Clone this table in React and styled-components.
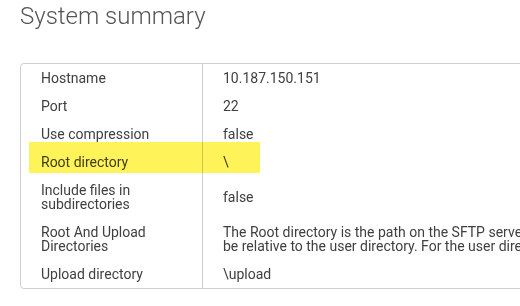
import React from 'react';
import styled, { createGlobalStyle } from 'styled-components';

const GlobalStyle = createGlobalStyle`
  html, body {
    margin: 0;
    padding: 0;
    background: #fff;
    overflow: hidden;
  }
  body {
    font-family: Roboto, "Liberation Sans", sans-serif;
    color: #404040;
  }
`;

const Page = styled.div`
  width: 520px;
  height: 306px;
  padding: 2px 0 0 20px;
  box-sizing: border-box;
  overflow: hidden;
`;

const Title = styled.h1`
  margin: 0 0 33px;
  font-size: 24px;
  line-height: 28px;
  font-weight: 300;
  color: #555;
  white-space: nowrap;
`;

const TableWrap = styled.div`
  position: relative;
  width: 640px;
`;

const Table = styled.div`
  display: grid;
  grid-template-columns: 182px 1fr;
  border: 1px solid #cfcfcf;
  border-radius: 4px;
  font-size: 14px;
  line-height: 14px;
`;

const Label = styled.div`
  padding: 7px 20px;
  border-right: 1px solid #cfcfcf;
  color: #404040;
`;

const Value = styled.div`
  padding: 7px 20px;
  display: flex;
  align-items: center;
  color: #404040;
  white-space: nowrap;
  overflow: hidden;
`;

const Highlight = styled.div`
  position: absolute;
  left: 9px;
  top: 79px;
  width: 231px;
  height: 31px;
  background: #fff35a;
  mix-blend-mode: multiply;
  pointer-events: none;
`;

const rows = [
  ['Hostname', '10.187.150.151'],
  ['Port', '22'],
  ['Use compression', 'false'],
  ['Root directory', '\\'],
  ['Include files in subdirectories', 'false'],
  [
    'Root And Upload Directories',
    <>
      The Root directory is the path on the SFTP server the user lands in. The upload directory must
      <br />
      be relative to the user directory. For the user directory the root is used.
    </>,
  ],
  ['Upload directory', '\\upload'],
];

const App = () => (
  <>
    <GlobalStyle />
    <Page>
      <Title>System summary</Title>
      <TableWrap>
        <Table>
          {rows.map(([label, value], i) => (
            <React.Fragment key={i}>
              <Label>{label}</Label>
              <Value>
                <div>{value}</div>
              </Value>
            </React.Fragment>
          ))}
        </Table>
        <Highlight />
      </TableWrap>
    </Page>
  </>
);

export default App;
